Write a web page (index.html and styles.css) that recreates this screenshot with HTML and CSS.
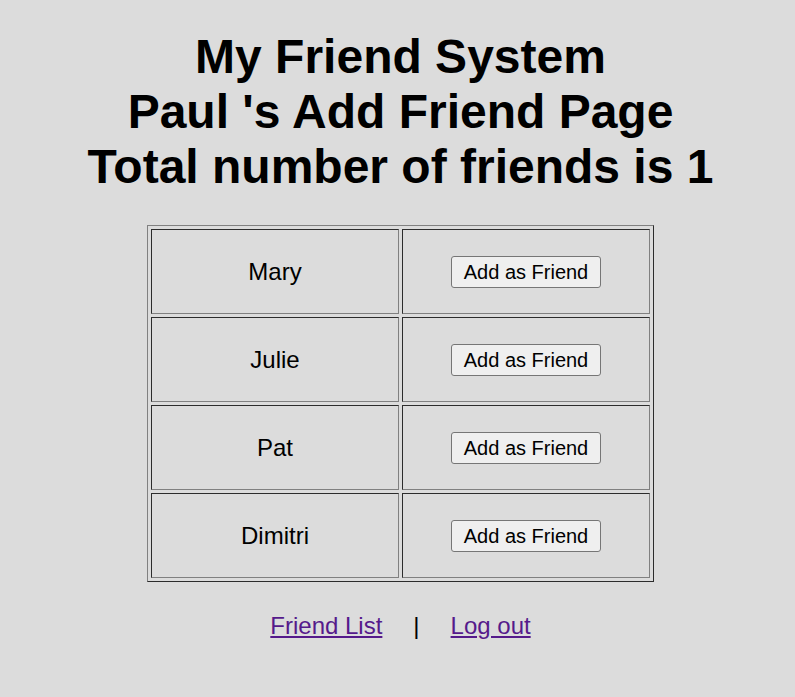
FILE: index.html
```html
<!DOCTYPE html>
<html lang="en">
<head>
<meta charset="utf-8">
<title>Add Friend</title>
<link rel="stylesheet" href="styles.css">
</head>
<body>
<main class="page">
  <h1 class="title">My Friend System<br>Paul 's Add Friend Page<br>Total number of friends is 1</h1>
  <table class="friends">
    <tr><td class="name">Mary</td><td class="action"><button class="add-btn" type="button">Add as Friend</button></td></tr>
    <tr><td class="name">Julie</td><td class="action"><button class="add-btn" type="button">Add as Friend</button></td></tr>
    <tr><td class="name">Pat</td><td class="action"><button class="add-btn" type="button">Add as Friend</button></td></tr>
    <tr><td class="name">Dimitri</td><td class="action"><button class="add-btn" type="button">Add as Friend</button></td></tr>
  </table>
  <p class="nav"><a class="nav-link" href="#">Friend List</a><span class="sep">|</span><a class="nav-link" href="#">Log out</a></p>
</main>
</body>
</html>
```

FILE: styles.css
```css
html, body {
  margin: 0;
  padding: 0;
  background: #dcdcdc;
}
body {
  font-family: "Liberation Sans", Arial, sans-serif;
  color: #000;
}
.page {
  padding: 29px 5px 20px 11px;
  text-align: center;
}
.title {
  margin: 0;
  font-size: 48px;
  font-weight: bold;
  line-height: 55px;
}
.friends {
  margin: 31px auto 0;
  width: 507px;
  border: 1px outset grey;
  border-spacing: 3px;
  font-size: 24px;
}
.friends td {
  border: 1px inset grey;
  height: 83px;
  padding: 0;
  text-align: center;
  vertical-align: middle;
  width: 50%;
}
.add-btn {
  font-family: "Liberation Sans", Arial, sans-serif;
  font-size: 20px;
  line-height: 22px;
  padding: 4px 12px;
  background: #efefef;
  border: 1px solid #767676;
  border-radius: 3px;
  color: #000;
}
.nav {
  margin: 30px 0 0;
  font-size: 24px;
  line-height: 28px;
}
.nav-link {
  color: #551a8b;
}
.sep {
  margin: 0 31px;
}
```
